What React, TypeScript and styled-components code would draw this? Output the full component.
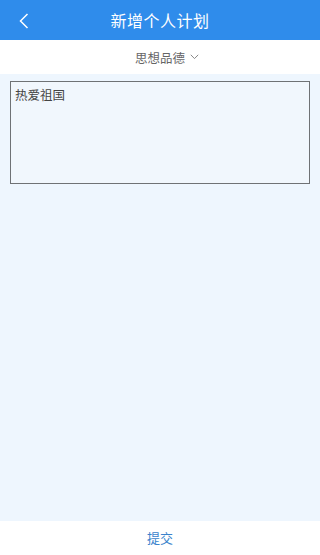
import styled, { createGlobalStyle } from "styled-components";

const GlobalStyle = createGlobalStyle`
  html, body {
    margin: 0;
    padding: 0;
    height: 100%;
  }
  body {
    font-family: "Noto Sans CJK SC", "Noto Sans", sans-serif;
  }
  #root {
    height: 100%;
  }
`;

const Page = styled.div`
  height: 555px;
  display: flex;
  flex-direction: column;
  background-color: #eef6fe;
`;

const Header = styled.div`
  height: 40px;
  flex-shrink: 0;
  background-color: #2f8ceb;
  display: flex;
  align-items: center;
  justify-content: center;
  position: relative;
`;

const BackButton = styled.button`
  position: absolute;
  left: 11px;
  top: 9px;
  width: 24px;
  height: 24px;
  padding: 0;
  border: none;
  background: none;
  display: flex;
  align-items: center;
  justify-content: center;
`;

const Title = styled.h1`
  margin: 0;
  font-size: 16px;
  font-weight: 400;
  color: #ffffff;
  letter-spacing: 0.5px;
`;

const SubjectBar = styled.div`
  height: 34px;
  flex-shrink: 0;
  box-sizing: border-box;
  padding-left: 14px;
  background-color: #ffffff;
  display: flex;
  align-items: center;
  justify-content: center;
  gap: 5px;
  font-size: 12.5px;
  color: #666666;
`;

const Content = styled.div`
  flex: 1;
  padding: 7px 10px;
`;

const PlanInput = styled.textarea`
  box-sizing: border-box;
  display: block;
  width: 100%;
  height: 103px;
  padding: 4px 4px;
  border: 1px solid #6f7275;
  background-color: #f1f7fd;
  font-family: "Noto Sans CJK SC", "Noto Sans", sans-serif;
  font-size: 12.5px;
  line-height: 18px;
  color: #444444;
  resize: none;
  outline: none;
`;

const Footer = styled.div`
  height: 34px;
  flex-shrink: 0;
  box-sizing: border-box;
  padding-bottom: 2px;
  background-color: #ffffff;
  display: flex;
  align-items: center;
  justify-content: center;
`;

const SubmitButton = styled.button`
  border: none;
  background: none;
  padding: 0;
  font-family: "Noto Sans CJK SC", "Noto Sans", sans-serif;
  font-size: 13px;
  color: #3a83cc;
`;

export default function App() {
  return (
    <>
      <GlobalStyle />
      <Page>
        <Header>
          <BackButton aria-label="back">
            <svg width="11" height="16" viewBox="0 0 11 16" fill="none">
              <path d="M9.5 1 L2.5 8 L9.5 15" stroke="#ffffff" strokeWidth="1.5" />
            </svg>
          </BackButton>
          <Title>新增个人计划</Title>
        </Header>
        <SubjectBar>
          思想品德
          <svg width="9" height="6" viewBox="0 0 9 6" fill="none">
            <path d="M0.8 0.8 L4.5 4.6 L8.2 0.8" stroke="#888888" strokeWidth="1" />
          </svg>
        </SubjectBar>
        <Content>
          <PlanInput defaultValue="热爱祖国" />
        </Content>
        <Footer>
          <SubmitButton>提交</SubmitButton>
        </Footer>
      </Page>
    </>
  );
}
